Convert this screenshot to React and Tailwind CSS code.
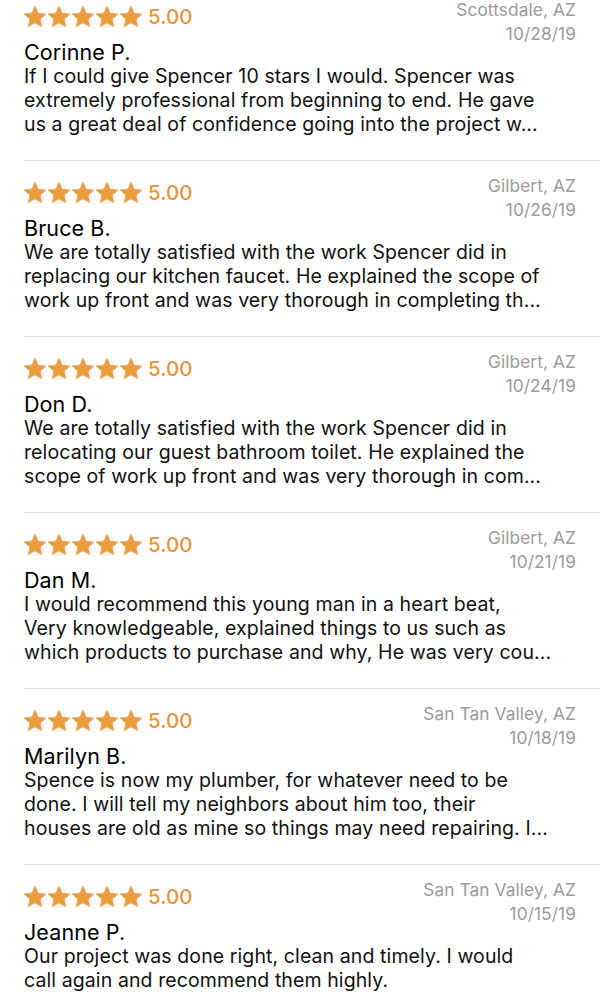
import React from 'react';

const reviews = [
    {
        name: 'Corinne P.',
        location: 'Scottsdale, AZ',
        date: '10/28/19',
        lines: [
            'If I could give Spencer 10 stars I would. Spencer was',
            'extremely professional from beginning to end. He gave',
            'us a great deal of confidence going into the project w...',
        ],
    },
    {
        name: 'Bruce B.',
        location: 'Gilbert, AZ',
        date: '10/26/19',
        lines: [
            'We are totally satisfied with the work Spencer did in',
            'replacing our kitchen faucet. He explained the scope of',
            'work up front and was very thorough in completing th...',
        ],
    },
    {
        name: 'Don D.',
        location: 'Gilbert, AZ',
        date: '10/24/19',
        lines: [
            'We are totally satisfied with the work Spencer did in',
            'relocating our guest bathroom toilet. He explained the',
            'scope of work up front and was very thorough in com...',
        ],
    },
    {
        name: 'Dan M.',
        location: 'Gilbert, AZ',
        date: '10/21/19',
        lines: [
            'I would recommend this young man in a heart beat,',
            'Very knowledgeable, explained things to us such as',
            'which products to purchase and why, He was very cou...',
        ],
    },
    {
        name: 'Marilyn B.',
        location: 'San Tan Valley, AZ',
        date: '10/18/19',
        lines: [
            'Spence is now my plumber, for whatever need to be',
            'done. I will tell my neighbors about him too, their',
            'houses are old as mine so things may need repairing. I...',
        ],
    },
    {
        name: 'Jeanne P.',
        location: 'San Tan Valley, AZ',
        date: '10/15/19',
        lines: [
            'Our project was done right, clean and timely. I would',
            'call again and recommend them highly.',
        ],
    },
];

function Star() {
    return (
        <svg viewBox="0 0 24 24" className="w-6 h-6 shrink-0" fill="#ee9a3f" stroke="#ee9a3f" strokeWidth="0.6" strokeLinejoin="round">
            <path d="M12 1 L15.17 8.13 L22.94 8.95 L17.14 14.17 L18.76 21.8 L12 17.9 L5.24 21.8 L6.86 14.17 L1.06 8.95 L8.83 8.13Z" />
        </svg>
    );
}

function Review({ review, last }) {
    return (
        <div className={`ml-6 pr-6 pt-[13px] pb-6 ${last ? '' : 'border-b border-[#dcdcdc]'}`}>
            <div className="flex justify-between items-start">
                <div className="pt-[7px]">
                    {/* Rating */}
                    <div className="flex items-center h-6 -ml-[1px]">
                        <Star />
                        <Star />
                        <Star />
                        <Star />
                        <Star />
                        <span className="ml-[5px] text-[20.5px] font-medium text-[#e6953c] leading-6">5.00</span>
                    </div>
                    <div className="mt-[11px] text-[21.5px] leading-6 text-black">{review.name}</div>
                </div>
                <div className="text-right text-[17.3px] leading-6 text-[#9b9b9b]">
                    <div>{review.location}</div>
                    <div>{review.date}</div>
                </div>
            </div>
            <div className="text-[19.5px] leading-6 text-[#111]">
                {review.lines.map((line, i) => (
                    <div key={i} className="whitespace-nowrap">{line}</div>
                ))}
            </div>
        </div>
    );
}

export default function App() {
    return (
        <div className="bg-white min-h-screen overflow-hidden font-['Inter',sans-serif] tracking-[0.1px]">
            <div className="-mt-[15px]">
                {reviews.map((r, i) => (
                    <Review key={i} review={r} last={i === reviews.length - 1} />
                ))}
            </div>
        </div>
    );
}
